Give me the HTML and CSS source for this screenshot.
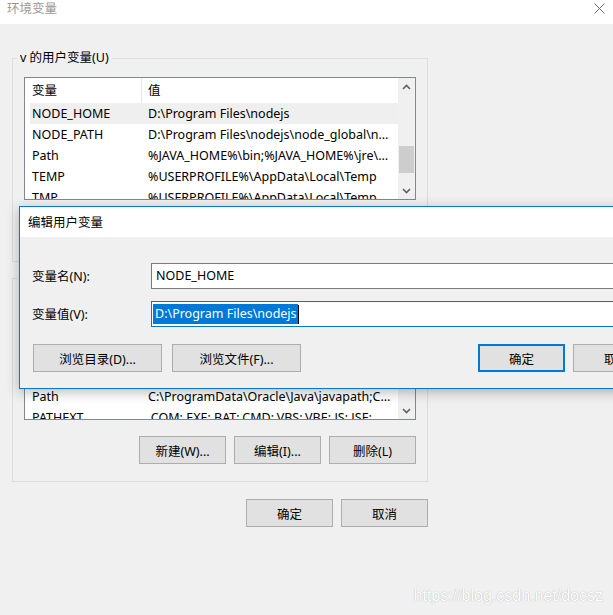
FILE: index.html
```html
<!DOCTYPE html>
<html lang="zh-CN">

<head>
    <meta charset="UTF-8">
    <meta name="viewport" content="width=device-width, initial-scale=1.0">
    <title>环境变量</title>
    <link rel="stylesheet" href="styles.css">
</head>

<body>

    <!-- Environment variables window (background) -->
    <div class="window">
        <div class="titlebar">
            <span class="title">环境变量</span>
            <svg class="close" width="11" height="11" viewBox="0 0 11 11">
                <path d="M0.5 0.5 L10.5 10.5 M10.5 0.5 L0.5 10.5" stroke="#6b6b6b" stroke-width="1" fill="none"/>
            </svg>
        </div>

        <div class="window-body">
            <!-- User variables -->
            <fieldset class="group">
                <legend>v 的用户变量(U)</legend>
                <div class="listbox">
                    <div class="list-main">
                        <div class="list-head">
                            <div class="head-name">变量</div>
                            <div class="head-value">值</div>
                        </div>
                        <div class="list-row selected">
                            <div class="cell-name">NODE_HOME</div>
                            <div class="cell-value">D:\Program Files\nodejs</div>
                        </div>
                        <div class="list-row">
                            <div class="cell-name">NODE_PATH</div>
                            <div class="cell-value">D:\Program Files\nodejs\node_global\node_modules</div>
                        </div>
                        <div class="list-row">
                            <div class="cell-name">Path</div>
                            <div class="cell-value">%JAVA_HOME%\bin;%JAVA_HOME%\jre\bin;D:\Program Files\nodejs</div>
                        </div>
                        <div class="list-row">
                            <div class="cell-name">TEMP</div>
                            <div class="cell-value">%USERPROFILE%\AppData\Local\Temp</div>
                        </div>
                        <div class="list-row">
                            <div class="cell-name">TMP</div>
                            <div class="cell-value">%USERPROFILE%\AppData\Local\Temp</div>
                        </div>
                    </div>
                    <div class="scrollbar">
                        <div class="arrow">
                            <svg width="9" height="6" viewBox="0 0 9 6"><path d="M1 5 L4.5 1.5 L8 5" fill="none" stroke="#606060" stroke-width="1.6"/></svg>
                        </div>
                        <div class="track"><div class="thumb thumb-user"></div></div>
                        <div class="arrow">
                            <svg width="9" height="6" viewBox="0 0 9 6"><path d="M1 1 L4.5 4.5 L8 1" fill="none" stroke="#606060" stroke-width="1.6"/></svg>
                        </div>
                    </div>
                </div>
                <div class="button-row">
                    <button class="btn">新建(N)...</button>
                    <button class="btn">编辑(E)...</button>
                    <button class="btn">删除(D)</button>
                </div>
            </fieldset>

            <!-- System variables -->
            <fieldset class="group group-system">
                <legend>系统变量(S)</legend>
                <div class="listbox">
                    <div class="list-main">
                        <div class="list-head">
                            <div class="head-name">变量</div>
                            <div class="head-value">值</div>
                        </div>
                        <div class="list-row">
                            <div class="cell-name">JAVA_HOME</div>
                            <div class="cell-value">C:\Program Files\Java\jdk1.8.0_201</div>
                        </div>
                        <div class="list-row">
                            <div class="cell-name">NUMBER_OF_PROCESSORS</div>
                            <div class="cell-value">4</div>
                        </div>
                        <div class="list-row">
                            <div class="cell-name">OS</div>
                            <div class="cell-value">Windows_NT</div>
                        </div>
                        <div class="list-row">
                            <div class="cell-name">Path</div>
                            <div class="cell-value">C:\ProgramData\Oracle\Java\javapath;C:\Windows\system32</div>
                        </div>
                        <div class="list-row">
                            <div class="cell-name">PATHEXT</div>
                            <div class="cell-value">.COM;.EXE;.BAT;.CMD;.VBS;.VBE;.JS;.JSE;.WSF;.WSH;.MSC</div>
                        </div>
                    </div>
                    <div class="scrollbar">
                        <div class="arrow">
                            <svg width="9" height="6" viewBox="0 0 9 6"><path d="M1 5 L4.5 1.5 L8 5" fill="none" stroke="#606060" stroke-width="1.6"/></svg>
                        </div>
                        <div class="track"><div class="thumb thumb-system"></div></div>
                        <div class="arrow">
                            <svg width="9" height="6" viewBox="0 0 9 6"><path d="M1 1 L4.5 4.5 L8 1" fill="none" stroke="#606060" stroke-width="1.6"/></svg>
                        </div>
                    </div>
                </div>
                <div class="button-row">
                    <button class="btn">新建(W)...</button>
                    <button class="btn">编辑(I)...</button>
                    <button class="btn">删除(L)</button>
                </div>
            </fieldset>

            <div class="button-row window-actions">
                <button class="btn">确定</button>
                <button class="btn">取消</button>
            </div>
        </div>
    </div>

    <!-- Edit user variable dialog (on top) -->
    <div class="dialog">
        <div class="dialog-title">编辑用户变量</div>
        <div class="dialog-body">
            <div class="form-grid">
                <label class="field-label">变量名(N):</label>
                <div class="field">NODE_HOME</div>
                <label class="field-label">变量值(V):</label>
                <div class="field focused"><span class="selection">D:\Program Files\nodejs</span><span class="caret"></span></div>
            </div>
            <div class="dialog-buttons">
                <button class="btn btn-wide">浏览目录(D)...</button>
                <button class="btn btn-wide">浏览文件(F)...</button>
                <button class="btn btn-default">确定</button>
                <button class="btn">取消</button>
            </div>
        </div>
    </div>

    <div class="watermark">https://blog.csdn.net/docsz</div>

</body>

</html>
```

FILE: styles.css
```css
body {
    margin: 0;
    width: 613px;
    height: 615px;
    overflow: hidden;
    position: relative;
    background-color: #f0f0f0;
    font-family: "Noto Sans", "Noto Sans CJK SC", sans-serif;
    font-size: 12.5px;
    color: #000;
}

/* Background window */

.titlebar {
    height: 24px;
    background-color: #ffffff;
    display: flex;
    align-items: flex-start;
    justify-content: space-between;
    padding: 0 8px 0 7px;
}

.title {
    line-height: 17px;
    color: #999999;
}

.close {
    margin-top: 3px;
}

.window-body {
    padding: 0 0 0 12px;
}

.group {
    width: 416px;
    box-sizing: border-box;
    min-width: 0;
    margin: 26px 0 0;
    padding: 11px 11px 17px;
    border: 1px solid #dcdcdc;
}

.group legend {
    margin-left: -7px;
    padding: 0 3px;
    line-height: 16px;
}

.group-system {
    margin-top: 8px;
}

.listbox {
    height: 123px;
    box-sizing: border-box;
    border: 1px solid #828790;
    background-color: #ffffff;
    display: flex;
}

.list-main {
    flex: 1;
    min-width: 0;
    overflow: hidden;
}

.list-head {
    display: grid;
    grid-template-columns: 117px 1fr;
    height: 25px;
    line-height: 25px;
}

.head-name {
    padding-left: 7px;
    border-right: 1px solid #e5e5e5;
}

.head-value {
    padding-left: 6px;
}

.list-row {
    display: grid;
    grid-template-columns: 116px 1fr;
    margin-left: 5px;
    height: 21px;
    line-height: 21px;
}

.list-row.selected {
    background-color: #efefef;
}

.cell-name,
.cell-value {
    padding-left: 2px;
    white-space: nowrap;
    overflow: hidden;
}

.cell-value {
    padding-right: 6px;
    text-overflow: ellipsis;
}

.scrollbar {
    width: 17px;
    background-color: #f0f0f0;
    display: flex;
    flex-direction: column;
}

.arrow {
    height: 17px;
    display: flex;
    align-items: center;
    justify-content: center;
}

.track {
    flex: 1;
}

.thumb {
    height: 27px;
    margin: 0 1px;
    background-color: #cdcdcd;
}

.thumb-user {
    margin-top: 51px;
}

.thumb-system {
    margin-top: 10px;
}

.button-row {
    display: flex;
    justify-content: flex-end;
    gap: 8px;
    margin-top: 16px;
}

.window-actions {
    width: 416px;
    margin-top: 17px;
}

.btn {
    width: 87px;
    height: 28px;
    box-sizing: border-box;
    padding: 0;
    border: 1px solid #adadad;
    background-color: #e1e1e1;
    font-family: inherit;
    font-size: inherit;
    color: #000;
}

/* Edit dialog */

.dialog {
    position: absolute;
    left: 19px;
    top: 206px;
    width: 655px;
    height: 183px;
    box-sizing: border-box;
    border: 1px solid #0078d7;
    background-color: #f0f0f0;
    box-shadow: 0 3px 12px rgba(0, 0, 0, 0.28);
}

.dialog-title {
    height: 30px;
    line-height: 31px;
    padding-left: 8px;
    background-color: #ffffff;
}

.dialog-body {
    padding: 26px 13px 0;
}

.form-grid {
    display: grid;
    grid-template-columns: 118px 1fr;
    row-gap: 12px;
    align-items: center;
}

.field-label {
    margin: -2px 0 0 -1px;
}

.field {
    height: 26px;
    box-sizing: border-box;
    border: 1px solid #7a7a7a;
    background-color: #ffffff;
    padding-left: 4px;
    line-height: 24px;
    white-space: nowrap;
    display: flex;
    align-items: center;
}

.field.focused {
    border-color: #0078d7;
    padding-left: 1px;
}

.selection {
    background-color: #0078d7;
    color: #ffffff;
    padding: 0 1px 0 2px;
    line-height: 20px;
}

.caret {
    width: 1px;
    height: 19px;
    background-color: #000;
}

.dialog-buttons {
    display: flex;
    gap: 8px;
    margin-top: 17px;
}

.btn-wide {
    width: 129px;
}

.btn-wide + .btn-wide {
    margin-left: 2px;
}

.btn-default {
    margin-left: auto;
    border: 2px solid #0078d7;
}

.watermark {
    position: absolute;
    right: 10px;
    top: 586px;
    font-family: "Liberation Sans", Arial, sans-serif;
    font-size: 16px;
    line-height: 20px;
    color: #ffffff;
    text-shadow: 0 0 1px rgba(0, 0, 0, 0.35);
}
```
